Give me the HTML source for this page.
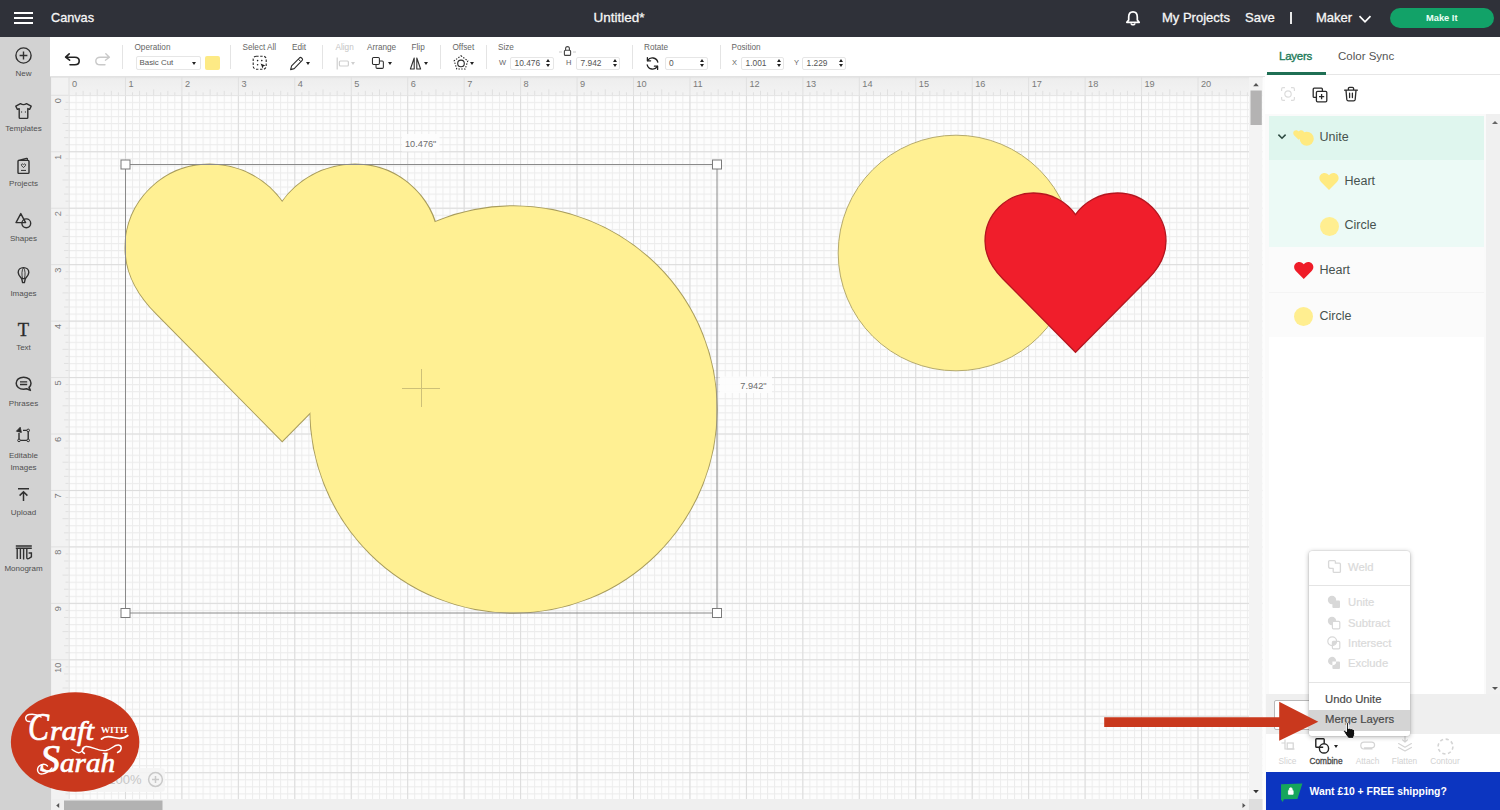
<!DOCTYPE html>
<html>
<head>
<meta charset="utf-8">
<title>Canvas</title>
<style>
*{box-sizing:border-box;margin:0;padding:0}
html,body{width:1500px;height:810px;overflow:hidden;background:#fafafa;font-family:"Liberation Sans",sans-serif;color:#444}
.abs{position:absolute}
#topbar{position:absolute;left:0;top:0;width:1500px;height:36.5px;background:#2f3139;color:#fff}
#topbar .t{position:absolute;top:10px;font-size:13px;line-height:16px;white-space:nowrap;color:#f6f6f6;-webkit-text-stroke:0.3px #f6f6f6}
#sidebar{position:absolute;left:0;top:37px;width:51px;height:773px;background:#d2d2d2}
#sidebar .lbl{position:absolute;left:-12px;width:71px;text-align:center;font-size:8px;line-height:10px;color:#505050;white-space:nowrap}
#sidebar svg{position:absolute}
#toolbar{position:absolute;left:50px;top:37px;width:1215px;height:40px;background:#fff;border-bottom:1px solid #e2e2e2}
#toolbar .h{position:absolute;top:5.5px;font-size:8.2px;line-height:9px;color:#666;white-space:nowrap}
#toolbar .sep{position:absolute;top:7.5px;width:1px;height:24px;background:#e4e4e4}
#toolbar .inp{position:absolute;top:19.5px;height:13px;border:1px solid #e6e6e6;border-radius:2px;background:#fff;font-size:8.4px;line-height:11px;color:#555;padding-left:3.5px;white-space:nowrap}
#toolbar .k{position:absolute;top:21px;font-size:7.5px;line-height:9px;color:#666}
#toolbar svg{position:absolute}
#canvas{position:absolute;left:50px;top:77px;width:1215px;height:733px;overflow:hidden;background:#fbfbfb}
#panel{position:absolute;left:1265px;top:37px;width:235px;height:773px;background:#fafafa}
</style>
</head>
<body>
<div id="canvas">
<svg class="abs" style="left:0;top:0" width="1215" height="733" viewBox="50 77 1215 733">
<defs>
<pattern id="minor" x="68.5" y="94.8" width="7.05625" height="7.05625" patternUnits="userSpaceOnUse">
<path d="M0.5 0V7.05625M0 0.5H7.05625" stroke="#ececec" stroke-width="1" fill="none"/>
</pattern>
<pattern id="major" x="68.5" y="94.8" width="56.45" height="56.45" patternUnits="userSpaceOnUse">
<path d="M0.5 0V56.45M0 0.5H56.45" stroke="#dcdcdc" stroke-width="1" fill="none"/>
</pattern>
</defs>
<rect x="50" y="77" width="1215" height="733" fill="#fdfdfd"/>
<rect x="50" y="77" width="1215" height="733" fill="url(#minor)"/>
<rect x="50" y="77" width="1215" height="733" fill="url(#major)"/>

<!-- united shape -->
<g stroke="#a89c5c" stroke-width="2" fill="#fff093">
<path d="M282.2 202.0C297.0 181.0 323.0 164.5 355.0 164.5C401.4 164.5 439.0 201.8 439.0 247.8C439.0 273.9 426.9 294.7 407.8 313.8L282.2 441.0L156.7 313.8C137.6 294.7 125.5 273.9 125.5 247.8C125.5 201.8 163.1 164.5 209.5 164.5C241.5 164.5 267.5 181.0 282.2 202.0Z"/>
<circle cx="513.5" cy="409.5" r="203.2"/>
</g>
<g fill="#fff093">
<path d="M282.2 202.0C297.0 181.0 323.0 164.5 355.0 164.5C401.4 164.5 439.0 201.8 439.0 247.8C439.0 273.9 426.9 294.7 407.8 313.8L282.2 441.0L156.7 313.8C137.6 294.7 125.5 273.9 125.5 247.8C125.5 201.8 163.1 164.5 209.5 164.5C241.5 164.5 267.5 181.0 282.2 202.0Z"/>
<circle cx="513.5" cy="409.5" r="203.2"/>
</g>
<!-- right circle + heart -->
<circle cx="956" cy="253" r="117.8" fill="#fff093" stroke="#b5aa6c" stroke-width="1"/>
<path d="M1075.5 214.6C1084.0 202.5 1099.0 193.0 1117.5 193.0C1144.3 193.0 1166.0 214.5 1166.0 241.0C1166.0 256.0 1159.0 268.0 1148.0 279.0L1075.5 352.3L1003.0 279.0C992.0 268.0 985.0 256.0 985.0 241.0C985.0 214.5 1006.7 193.0 1033.5 193.0C1052.0 193.0 1067.0 202.5 1075.5 214.6Z" fill="#f01e2b" stroke="#b5161f" stroke-width="1.3"/>
<!-- selection box -->
<rect x="125.5" y="164.5" width="591.5" height="448.5" fill="none" stroke="#8a8a8a" stroke-width="1"/>
<g fill="#fff" stroke="#7a7a7a" stroke-width="1">
<rect x="121" y="160" width="9" height="9"/>
<rect x="712.5" y="160" width="9" height="9"/>
<rect x="121" y="608.5" width="9" height="9"/>
<rect x="712.5" y="608.5" width="9" height="9"/>
</g>
<path d="M421.5 369V407M402 388.5H440" stroke="#cdc078" stroke-width="1" fill="none"/>
<rect x="402" y="134" width="37.5" height="17.500000" fill="#fdfdfd" opacity="0.9"/>
<text id="dim_w" x="405" y="146.6" font-family="Liberation Sans, sans-serif" font-size="9.2" fill="#6c6c6c">10.476"</text>
<rect x="720" y="376.5" width="52" height="16.500000" fill="#fdfdfd" opacity="0.9"/>
<text id="dim_h" x="740.3" y="388.6" font-family="Liberation Sans, sans-serif" font-size="9.2" fill="#6c6c6c">7.942"</text>
<!--SHAPES-->
</svg>
<!--RUL-START-->
<svg class="abs" style="left:0;top:0" width="1215" height="733" viewBox="50 77 1215 733">
<defs><linearGradient id="rg" x1="0" y1="0" x2="0" y2="1"><stop offset="0" stop-color="#e2e2e2"/><stop offset="0.1" stop-color="#eeeeee"/><stop offset="1" stop-color="#f3f3f3"/></linearGradient></defs>
<rect x="50" y="77" width="1213" height="18.3" fill="url(#rg)"/>
<rect x="50" y="78" width="18.5" height="732" fill="#f2f2f2"/>
<rect x="50" y="77" width="1.2" height="733" fill="#e4e4e4"/>
<path d="M69.00 77.0V95.3M76.06 92.3V95.3M83.11 90.8V95.3M90.17 92.3V95.3M97.22 89.3V95.3M104.28 92.3V95.3M111.34 90.8V95.3M118.39 92.3V95.3M125.45 77.0V95.3M132.51 92.3V95.3M139.56 90.8V95.3M146.62 92.3V95.3M153.68 89.3V95.3M160.73 92.3V95.3M167.79 90.8V95.3M174.84 92.3V95.3M181.90 77.0V95.3M188.96 92.3V95.3M196.01 90.8V95.3M203.07 92.3V95.3M210.12 89.3V95.3M217.18 92.3V95.3M224.24 90.8V95.3M231.29 92.3V95.3M238.35 77.0V95.3M245.41 92.3V95.3M252.46 90.8V95.3M259.52 92.3V95.3M266.58 89.3V95.3M273.63 92.3V95.3M280.69 90.8V95.3M287.74 92.3V95.3M294.80 77.0V95.3M301.86 92.3V95.3M308.91 90.8V95.3M315.97 92.3V95.3M323.02 89.3V95.3M330.08 92.3V95.3M337.14 90.8V95.3M344.19 92.3V95.3M351.25 77.0V95.3M358.31 92.3V95.3M365.36 90.8V95.3M372.42 92.3V95.3M379.48 89.3V95.3M386.53 92.3V95.3M393.59 90.8V95.3M400.64 92.3V95.3M407.70 77.0V95.3M414.76 92.3V95.3M421.81 90.8V95.3M428.87 92.3V95.3M435.93 89.3V95.3M442.98 92.3V95.3M450.04 90.8V95.3M457.09 92.3V95.3M464.15 77.0V95.3M471.21 92.3V95.3M478.26 90.8V95.3M485.32 92.3V95.3M492.38 89.3V95.3M499.43 92.3V95.3M506.49 90.8V95.3M513.54 92.3V95.3M520.60 77.0V95.3M527.66 92.3V95.3M534.71 90.8V95.3M541.77 92.3V95.3M548.83 89.3V95.3M555.88 92.3V95.3M562.94 90.8V95.3M569.99 92.3V95.3M577.05 77.0V95.3M584.11 92.3V95.3M591.16 90.8V95.3M598.22 92.3V95.3M605.27 89.3V95.3M612.33 92.3V95.3M619.39 90.8V95.3M626.44 92.3V95.3M633.50 77.0V95.3M640.56 92.3V95.3M647.61 90.8V95.3M654.67 92.3V95.3M661.73 89.3V95.3M668.78 92.3V95.3M675.84 90.8V95.3M682.89 92.3V95.3M689.95 77.0V95.3M697.01 92.3V95.3M704.06 90.8V95.3M711.12 92.3V95.3M718.18 89.3V95.3M725.23 92.3V95.3M732.29 90.8V95.3M739.34 92.3V95.3M746.40 77.0V95.3M753.46 92.3V95.3M760.51 90.8V95.3M767.57 92.3V95.3M774.62 89.3V95.3M781.68 92.3V95.3M788.74 90.8V95.3M795.79 92.3V95.3M802.85 77.0V95.3M809.91 92.3V95.3M816.96 90.8V95.3M824.02 92.3V95.3M831.08 89.3V95.3M838.13 92.3V95.3M845.19 90.8V95.3M852.24 92.3V95.3M859.30 77.0V95.3M866.36 92.3V95.3M873.41 90.8V95.3M880.47 92.3V95.3M887.53 89.3V95.3M894.58 92.3V95.3M901.64 90.8V95.3M908.69 92.3V95.3M915.75 77.0V95.3M922.81 92.3V95.3M929.86 90.8V95.3M936.92 92.3V95.3M943.98 89.3V95.3M951.03 92.3V95.3M958.09 90.8V95.3M965.14 92.3V95.3M972.20 77.0V95.3M979.26 92.3V95.3M986.31 90.8V95.3M993.37 92.3V95.3M1000.43 89.3V95.3M1007.48 92.3V95.3M1014.54 90.8V95.3M1021.59 92.3V95.3M1028.65 77.0V95.3M1035.71 92.3V95.3M1042.76 90.8V95.3M1049.82 92.3V95.3M1056.88 89.3V95.3M1063.93 92.3V95.3M1070.99 90.8V95.3M1078.04 92.3V95.3M1085.10 77.0V95.3M1092.16 92.3V95.3M1099.21 90.8V95.3M1106.27 92.3V95.3M1113.33 89.3V95.3M1120.38 92.3V95.3M1127.44 90.8V95.3M1134.49 92.3V95.3M1141.55 77.0V95.3M1148.61 92.3V95.3M1155.66 90.8V95.3M1162.72 92.3V95.3M1169.78 89.3V95.3M1176.83 92.3V95.3M1183.89 90.8V95.3M1190.94 92.3V95.3M1198.00 77.0V95.3M1205.06 92.3V95.3M1212.11 90.8V95.3M1219.17 92.3V95.3M1226.23 89.3V95.3M1233.28 92.3V95.3M1240.34 90.8V95.3M1247.39 92.3V95.3" stroke="#e0e0e0" stroke-width="1" fill="none"/>
<path d="M50.0 95.30H68.5M65.5 102.36H68.5M64.0 109.41H68.5M65.5 116.47H68.5M62.5 123.53H68.5M65.5 130.58H68.5M64.0 137.64H68.5M65.5 144.69H68.5M50.0 151.75H68.5M65.5 158.81H68.5M64.0 165.86H68.5M65.5 172.92H68.5M62.5 179.98H68.5M65.5 187.03H68.5M64.0 194.09H68.5M65.5 201.14H68.5M50.0 208.20H68.5M65.5 215.26H68.5M64.0 222.31H68.5M65.5 229.37H68.5M62.5 236.43H68.5M65.5 243.48H68.5M64.0 250.54H68.5M65.5 257.59H68.5M50.0 264.65H68.5M65.5 271.71H68.5M64.0 278.76H68.5M65.5 285.82H68.5M62.5 292.88H68.5M65.5 299.93H68.5M64.0 306.99H68.5M65.5 314.04H68.5M50.0 321.10H68.5M65.5 328.16H68.5M64.0 335.21H68.5M65.5 342.27H68.5M62.5 349.32H68.5M65.5 356.38H68.5M64.0 363.44H68.5M65.5 370.49H68.5M50.0 377.55H68.5M65.5 384.61H68.5M64.0 391.66H68.5M65.5 398.72H68.5M62.5 405.78H68.5M65.5 412.83H68.5M64.0 419.89H68.5M65.5 426.94H68.5M50.0 434.00H68.5M65.5 441.06H68.5M64.0 448.11H68.5M65.5 455.17H68.5M62.5 462.23H68.5M65.5 469.28H68.5M64.0 476.34H68.5M65.5 483.39H68.5M50.0 490.45H68.5M65.5 497.51H68.5M64.0 504.56H68.5M65.5 511.62H68.5M62.5 518.67H68.5M65.5 525.73H68.5M64.0 532.79H68.5M65.5 539.84H68.5M50.0 546.90H68.5M65.5 553.96H68.5M64.0 561.01H68.5M65.5 568.07H68.5M62.5 575.12H68.5M65.5 582.18H68.5M64.0 589.24H68.5M65.5 596.29H68.5M50.0 603.35H68.5M65.5 610.41H68.5M64.0 617.46H68.5M65.5 624.52H68.5M62.5 631.57H68.5M65.5 638.63H68.5M64.0 645.69H68.5M65.5 652.74H68.5M50.0 659.80H68.5M65.5 666.86H68.5M64.0 673.91H68.5M65.5 680.97H68.5M62.5 688.02H68.5M65.5 695.08H68.5M64.0 702.14H68.5M65.5 709.19H68.5M50.0 716.25H68.5M65.5 723.31H68.5M64.0 730.36H68.5M65.5 737.42H68.5M62.5 744.48H68.5M65.5 751.53H68.5M64.0 758.59H68.5M65.5 765.64H68.5M50.0 772.70H68.5M65.5 779.76H68.5M64.0 786.81H68.5M65.5 793.87H68.5" stroke="#e0e0e0" stroke-width="1" fill="none"/>
<g font-family="Liberation Sans, sans-serif" font-size="9.2" fill="#7a7a7a">
<text x="72.0" y="87.4">0</text><text x="128.4" y="87.4">1</text><text x="184.9" y="87.4">2</text><text x="241.4" y="87.4">3</text><text x="297.8" y="87.4">4</text><text x="354.2" y="87.4">5</text><text x="410.7" y="87.4">6</text><text x="467.2" y="87.4">7</text><text x="523.6" y="87.4">8</text><text x="580.0" y="87.4">9</text><text x="636.5" y="87.4">10</text><text x="693.0" y="87.4">11</text><text x="749.4" y="87.4">12</text><text x="805.9" y="87.4">13</text><text x="862.3" y="87.4">14</text><text x="918.8" y="87.4">15</text><text x="975.2" y="87.4">16</text><text x="1031.7" y="87.4">17</text><text x="1088.1" y="87.4">18</text><text x="1144.5" y="87.4">19</text><text x="1201.0" y="87.4">20</text>
<text transform="translate(60.8 98.1) rotate(-90)" text-anchor="end">0</text><text transform="translate(60.8 154.6) rotate(-90)" text-anchor="end">1</text><text transform="translate(60.8 211.0) rotate(-90)" text-anchor="end">2</text><text transform="translate(60.8 267.5) rotate(-90)" text-anchor="end">3</text><text transform="translate(60.8 323.9) rotate(-90)" text-anchor="end">4</text><text transform="translate(60.8 380.4) rotate(-90)" text-anchor="end">5</text><text transform="translate(60.8 436.8) rotate(-90)" text-anchor="end">6</text><text transform="translate(60.8 493.3) rotate(-90)" text-anchor="end">7</text><text transform="translate(60.8 549.7) rotate(-90)" text-anchor="end">8</text><text transform="translate(60.8 606.1) rotate(-90)" text-anchor="end">9</text><text transform="translate(60.8 662.6) rotate(-90)" text-anchor="end">10</text><text transform="translate(60.8 719.0) rotate(-90)" text-anchor="end">11</text><text transform="translate(60.8 775.5) rotate(-90)" text-anchor="end">12</text>
</g>
<rect x="1249" y="77.5" width="13.5" height="733" fill="#f3f3f3"/>
<rect x="1250.5" y="90.5" width="11.3" height="34.5" fill="#b4b3b3"/>
<path d="M1253.2 86.2L1256 83L1258.8 86.2Z" fill="#555"/>
<path d="M1253.2 790L1256 793.2L1258.8 790Z" fill="#333"/>
<rect x="1262.5" y="77.5" width="3" height="733" fill="#fdfdfd"/>
<rect x="50" y="799" width="1199" height="11" fill="#efefef"/>
<rect x="64" y="800.5" width="98.5" height="9.5" fill="#b2b2b2"/>
<path d="M59.2 803L56.2 805.5L59.2 808Z" fill="#555"/>
<path d="M1242.5 803L1245.5 805.5L1242.5 808Z" fill="#555"/>
<rect x="1249" y="799" width="13.5" height="11" fill="#dedede"/>
</svg>
<!--RUL-END-->

</div>
<div id="topbar">

<div class="abs" style="left:14px;top:12px;width:19px;height:2px;background:#fff"></div>
<div class="abs" style="left:14px;top:17px;width:19px;height:2px;background:#fff"></div>
<div class="abs" style="left:14px;top:22px;width:19px;height:2px;background:#fff"></div>
<div class="t" id="t_canvas" style="left:51px;font-size:12.7px">Canvas</div>
<div class="t" id="t_untitled" style="left:593.5px;font-size:13.5px">Untitled*</div>
<svg class="abs" style="left:1125px;top:10.3px" width="16" height="17" viewBox="0 0 16 17"><path d="M1.8 12.3L3.7 10V7C3.7 3.800000 5.600000 1.800000 8 1.800000C10.4 1.800000 12.3 3.8 12.3 7V10L14.2 12.3Z" fill="none" stroke="#fff" stroke-width="1.7" stroke-linejoin="round"/><path d="M6.2 13.9Q8 15.8 9.800000 13.9" fill="none" stroke="#fff" stroke-width="1.500000" stroke-linecap="round"/></svg>
<div class="t" id="t_myproj" style="left:1162px">My Projects</div>
<div class="t" id="t_save" style="left:1245px">Save</div>
<div class="abs" style="left:1290px;top:12px;width:2px;height:11.5px;background:#e8e8e8"></div>
<div class="t" id="t_maker" style="left:1316px">Maker</div>
<svg class="abs" style="left:1358px;top:13.5px" width="14" height="10" viewBox="0 0 14 10"><path d="M1.500000 2.2L7 7.8L12.500000 2.2" fill="none" stroke="#fff" stroke-width="1.700000"/></svg>
<div class="abs" id="makeit" style="left:1390px;top:7.600000px;width:103.500000px;height:20.600000px;border-radius:10.300000px;background:#12a268;color:#e9fff6;font-size:9.3px;font-weight:bold;line-height:20.600000px;text-align:center">Make It</div>

</div>
<div id="sidebar">
<svg style="left:14px;top:9px" width="19" height="19" viewBox="0 0 19 19"><circle cx="9.5" cy="9.500000" r="7.6" fill="none" stroke="#303030" stroke-width="1.4"/><path d="M9.500000 5.600000V13.400000M5.600000 9.500000H13.400000" stroke="#303030" stroke-width="1.4"/></svg>
<div class="lbl" id="l_new" style="top:32px">New</div>
<svg style="left:14px;top:65px" width="19" height="18" viewBox="0 0 19 18"><path d="M6.500000 1.600000Q9.500000 3.600000 12.500000 1.600000L17.200000 4.200000L15.600000 7.400000L13.800000 6.600000V15.600000Q13.800000 16.400000 13 16.400000H6Q5.200000 16.400000 5.200000 15.600000V6.600000L3.400000 7.400000L1.800000 4.200000Z" fill="none" stroke="#303030" stroke-width="1.4" stroke-linejoin="round"/><path d="M7.600000 9.400000V10.600000M11.400000 9.400000V10.600000" stroke="#303030" stroke-width="1"/></svg>
<div class="lbl" id="l_tmpl" style="top:87px">Templates</div>
<svg style="left:16px;top:120px" width="15" height="18" viewBox="0 0 15 18"><path d="M2.600000 3.400000L10.500000 1.400000Q11.400000 1.200000 11.400000 2.200000V3.400000M2.400000 3.400000H12Q13 3.400000 13 4.400000V15.400000Q13 16.400000 12 16.400000H3Q2 16.400000 2 15.400000V4.400000Q2 3.400000 3 3.400000Z" fill="none" stroke="#303030" stroke-width="1.4" stroke-linejoin="round"/><path d="M7.500000 10.600000L5.600000 8.700000Q4.900000 7.600000 5.900000 7Q6.900000 6.600000 7.500000 7.600000Q8.100000 6.600000 9.100000 7Q10.100000 7.600000 9.400000 8.700000Z" fill="none" stroke="#303030" stroke-width="0.9"/><path d="M5 13.400000H10" stroke="#303030" stroke-width="1"/></svg>
<div class="lbl" id="l_proj" style="top:142px">Projects</div>
<svg style="left:14px;top:174px" width="20" height="19" viewBox="0 0 20 19"><path d="M6.800000 2.600000L11.600000 11.600000H2Z" fill="none" stroke="#303030" stroke-width="1.4" stroke-linejoin="round"/><circle cx="12.300000" cy="12.300000" r="4.400000" fill="none" stroke="#303030" stroke-width="1.4"/></svg>
<div class="lbl" id="l_shapes" style="top:197px">Shapes</div>
<svg style="left:16px;top:229px" width="15" height="19" viewBox="0 0 15 19"><path d="M7.500000 1.600000C10.800000 1.600000 12.800000 3.800000 12.800000 6.400000C12.800000 9 10.600000 11 9.300000 12.600000H5.700000C4.400000 11 2.200000 9 2.200000 6.400000C2.200000 3.800000 4.200000 1.600000 7.500000 1.600000Z" fill="none" stroke="#303030" stroke-width="1.4"/><path d="M7.500000 1.600000C5.600000 3.600000 5.600000 9.600000 6.600000 12.600000M7.500000 1.600000C9.400000 3.600000 9.400000 9.600000 8.400000 12.600000" fill="none" stroke="#303030" stroke-width="0.9"/><path d="M5.700000 12.600000L6.600000 16.600000H8.400000L9.300000 12.600000" fill="none" stroke="#303030" stroke-width="1.4" stroke-linejoin="round"/></svg>
<div class="lbl" id="l_images" style="top:252px">Images</div>
<div class="abs" style="left:13px;top:281.5px;width:21px;text-align:center;font-family:'Liberation Serif',serif;font-size:18.5px;line-height:22px;color:#2a2a2a;-webkit-text-stroke:0.3px #2a2a2a">T</div>
<div class="lbl" id="l_text" style="top:306px">Text</div>
<svg style="left:14px;top:338px" width="20" height="18" viewBox="0 0 20 18"><path d="M9.600000 2.200000C14 2.200000 17 4.800000 17 8.200000C17 10 16.200000 11.400000 15 12.400000L16.400000 15.400000L12.600000 13.800000C11.600000 14.100000 10.600000 14.200000 9.600000 14.200000C5.200000 14.200000 2.200000 11.600000 2.200000 8.200000C2.200000 4.800000 5.200000 2.200000 9.600000 2.200000Z" fill="none" stroke="#303030" stroke-width="1.5" stroke-linejoin="round"/><path d="M6 6.900000H13.200000M6 9.500000H13.200000" stroke="#303030" stroke-width="1.4"/></svg>
<div class="lbl" id="l_phr" style="top:361.5px">Phrases</div>
<svg style="left:14px;top:388px" width="19" height="20" viewBox="0 0 19 20"><path d="M6.200000 2.200000L7.400000 7.400000L2.400000 6.200000Z" fill="#2a2a2a" stroke="#2a2a2a" stroke-width="0.8" stroke-linejoin="round"/><path d="M5 8V15.400000H14.200000V5.400000H9" fill="none" stroke="#303030" stroke-width="1.4"/><circle cx="5" cy="15.400000" r="1.300000" fill="#d2d2d2" stroke="#303030" stroke-width="1"/><circle cx="14.200000" cy="15.400000" r="1.300000" fill="#d2d2d2" stroke="#303030" stroke-width="1"/><circle cx="14.200000" cy="5.400000" r="1.300000" fill="#d2d2d2" stroke="#303030" stroke-width="1"/></svg>
<div class="lbl" id="l_edit" style="top:413.5px">Editable</div>
<div class="lbl" id="l_edit2" style="top:425.5px">Images</div>
<svg style="left:15px;top:449px" width="17" height="18" viewBox="0 0 17 18"><path d="M3 2.800000H14M8.500000 15V6M4.600000 9.600000L8.500000 5.800000L12.400000 9.600000" fill="none" stroke="#303030" stroke-width="1.5"/></svg>
<div class="lbl" id="l_upl" style="top:471px">Upload</div>
<svg style="left:14px;top:506px" width="20" height="19" viewBox="0 0 20 19"><path d="M1.800000 3H17.800000M1.800000 5.200000H17.800000M3.200000 5.200000V16M6.400000 5.200000V16M9.600000 5.200000V16.400000M12.800000 5.200000V14.400000Q12.800000 16.400000 15 15.400000L17.400000 13.800000V10H14.600000" fill="none" stroke="#303030" stroke-width="1.4"/></svg>
<div class="lbl" id="l_mono" style="top:526.5px">Monogram</div>

</div>
<div id="toolbar">
<svg style="left:13px;top:14px" width="20" height="18" viewBox="0 0 20 18"><path d="M6.2 2.8L2.6 6.2L6.6 9.2M2.8 6.2H11.8C14.6 6.2 16.2 7.8 16.2 10C16.2 12.2 14.6 13.8 11.8 13.8H7" fill="none" stroke="#222" stroke-width="1.6" stroke-linejoin="round" stroke-linecap="round"/></svg>
<svg style="left:42px;top:14px" width="20" height="18" viewBox="0 0 20 18"><path d="M13.800000 2.800000L17.400000 6.200000L13.400000 9.200000M17.200000 6.200000H8.200000C5.400000 6.200000 3.800000 7.800000 3.800000 10C3.800000 12.200000 5.400000 13.800000 8.200000 13.800000H13" fill="none" stroke="#c9c9c9" stroke-width="1.4" stroke-linejoin="round" stroke-linecap="round"/></svg>
<div class="sep" style="left:72px"></div>
<div class="h" id="h_op" style="left:84.5px;color:#666">Operation</div>
<div class="inp" id="i_op" style="left:85.5px;width:65px;top:19px;height:13.5px;font-size:7.9px;padding-left:3px">Basic Cut</div>
<div class="abs" style="left:141.5px;top:24.5px;width:0;height:0;border-left:2.5px solid transparent;border-right:2.5px solid transparent;border-top:3.5px solid #222"></div>
<div class="abs" style="left:155px;top:18.5px;width:15px;height:14.500000px;border-radius:2px;background:#fdea85"></div>
<div class="sep" style="left:180px"></div>
<div class="h" id="h_sel" style="left:192.5px;color:#666">Select All</div>
<svg style="left:201px;top:17px" width="18" height="18" viewBox="0 0 18 18"><rect x="2.200000" y="2.200000" width="13" height="13" rx="3" fill="none" stroke="#2c2c2c" stroke-width="1.1" stroke-dasharray="2.400000 1.600000"/><g fill="#222"><circle cx="6.600000" cy="6.600000" r="0.800000"/><circle cx="10.800000" cy="6.600000" r="0.800000"/><circle cx="6.600000" cy="10.800000" r="0.800000"/><path d="M9.600000 9.400000L14.400000 11.400000L12.400000 12.200000L11.600000 14.400000Z"/></g></svg>
<div class="h" id="h_edit" style="left:242px;color:#666">Edit</div>
<svg style="left:238px;top:17.5px" width="17" height="17" viewBox="0 0 17 17"><path d="M2.600000 14.600000L3.600000 10.800000L11.600000 2.800000Q12.600000 2 13.600000 3L14.200000 3.600000Q15 4.600000 14.200000 5.400000L6.200000 13.600000Z" fill="none" stroke="#2c2c2c" stroke-width="1.1" stroke-linejoin="round"/><path d="M10.400000 4.200000L12.800000 6.600000" stroke="#222" stroke-width="1"/></svg>
<div class="abs" style="left:255.5px;top:25px;width:0;height:0;border-left:2.5px solid transparent;border-right:2.5px solid transparent;border-top:3.5px solid #222"></div>
<div class="sep" style="left:271.5px"></div>
<div class="h" id="h_align" style="left:285.5px;color:#c4c4c4">Align</div>
<svg style="left:284.5px;top:18.5px" width="16" height="15" viewBox="0 0 16 15"><path d="M2.200000 1.500000V13.500000" stroke="#cfcfcf" stroke-width="1.2"/><rect x="4.400000" y="5" width="9" height="5" rx="1" fill="none" stroke="#cfcfcf" stroke-width="1.2"/></svg>
<div class="abs" style="left:301.0px;top:25px;width:0;height:0;border-left:2.5px solid transparent;border-right:2.5px solid transparent;border-top:3.5px solid #cfcfcf"></div>
<div class="h" id="h_arr" style="left:317px;color:#666">Arrange</div>
<svg style="left:320px;top:18px" width="16" height="16" viewBox="0 0 17 17"><rect x="2.600000" y="2.600000" width="7.400000" height="7.400000" rx="1.200000" fill="none" stroke="#2c2c2c" stroke-width="1.1"/><path d="M10 6.400000H13Q14.200000 6.400000 14.200000 7.600000V13Q14.200000 14.200000 13 14.200000H7.600000Q6.400000 14.200000 6.400000 13V10" fill="none" stroke="#2c2c2c" stroke-width="1.1"/></svg>
<div class="abs" style="left:337.5px;top:25px;width:0;height:0;border-left:2.5px solid transparent;border-right:2.5px solid transparent;border-top:3.5px solid #222"></div>
<div class="h" id="h_flip" style="left:361.5px;color:#666">Flip</div>
<svg style="left:357px;top:17.5px" width="17" height="17" viewBox="0 0 17 17"><path d="M7.2 3V14H3.4Z" fill="none" stroke="#333" stroke-width="1.1" stroke-linejoin="round"/><path d="M9.8 3V14H13.6Z" fill="none" stroke="#333" stroke-width="1.1" stroke-linejoin="round"/></svg>
<div class="abs" style="left:374.0px;top:25px;width:0;height:0;border-left:2.5px solid transparent;border-right:2.5px solid transparent;border-top:3.5px solid #222"></div>
<div class="sep" style="left:390px"></div>
<div class="h" id="h_off" style="left:402.5px;color:#666">Offset</div>
<svg style="left:401.5px;top:17px" width="18" height="18" viewBox="0 0 18 18"><path d="M9 1.800000L15.800000 6.800000L13.200000 15H4.800000L2.200000 6.800000Z" fill="none" stroke="#222" stroke-width="1.1" stroke-dasharray="1.400000 1.400000" stroke-linejoin="round"/><circle cx="9" cy="9.400000" r="3.300000" fill="none" stroke="#2c2c2c" stroke-width="1.1"/></svg>
<div class="abs" style="left:419.5px;top:25px;width:0;height:0;border-left:2.5px solid transparent;border-right:2.5px solid transparent;border-top:3.5px solid #222"></div>
<div class="sep" style="left:435.5px"></div>
<div class="h" id="h_size" style="left:448px;color:#666">Size</div>
<div class="k" id="k_w" style="left:449px">W</div>
<div class="inp" id="i_w" style="left:460px;width:44px">10.476</div>
<div class="abs" style="left:495.5px;top:21.5px;width:0;height:0;border-left:2.5px solid transparent;border-right:2.5px solid transparent;border-bottom:3.5px solid #222"></div><div class="abs" style="left:495.5px;top:26.5px;width:0;height:0;border-left:2.5px solid transparent;border-right:2.5px solid transparent;border-top:3.5px solid #222"></div>
<svg style="left:508px;top:7.5px" width="19" height="12" viewBox="0 0 19 12"><path d="M1 7H4M15 7H18" stroke="#c8c8c8" stroke-width="1"/><rect x="6.400000" y="5.200000" width="6.200000" height="5.200000" rx="1" fill="none" stroke="#444" stroke-width="1.1"/><path d="M7.600000 5.200000V3.600000Q7.600000 1.600000 9.500000 1.600000Q11.400000 1.600000 11.400000 3.600000V5.200000" fill="none" stroke="#444" stroke-width="1.1"/></svg>
<div class="k" id="k_h" style="left:516px">H</div>
<div class="inp" id="i_h" style="left:526px;width:44px">7.942</div>
<div class="abs" style="left:562.5px;top:21.5px;width:0;height:0;border-left:2.5px solid transparent;border-right:2.5px solid transparent;border-bottom:3.5px solid #222"></div><div class="abs" style="left:562.5px;top:26.5px;width:0;height:0;border-left:2.5px solid transparent;border-right:2.5px solid transparent;border-top:3.5px solid #222"></div>
<div class="sep" style="left:581.5px"></div>
<div class="h" id="h_rot" style="left:594px;color:#666">Rotate</div>
<svg style="left:593.5px;top:18px" width="17" height="17" viewBox="0 0 17 17"><path d="M13.800000 7.200000A5.600000 5.600000 0 0 0 3.600000 5.600000M3.200000 9.800000A5.600000 5.600000 0 0 0 13.400000 11.400000" fill="none" stroke="#222" stroke-width="1.300000" stroke-linecap="round"/><path d="M3.400000 2.600000V5.800000H6.600000M13.600000 14.400000V11.200000H10.400000" fill="none" stroke="#222" stroke-width="1.300000" stroke-linecap="round" stroke-linejoin="round"/></svg>
<div class="inp" id="i_r" style="left:614.5px;width:43.5px">0</div>
<div class="abs" style="left:650.0px;top:21.5px;width:0;height:0;border-left:2.5px solid transparent;border-right:2.5px solid transparent;border-bottom:3.5px solid #222"></div><div class="abs" style="left:650.0px;top:26.5px;width:0;height:0;border-left:2.5px solid transparent;border-right:2.5px solid transparent;border-top:3.5px solid #222"></div>
<div class="sep" style="left:669.5px"></div>
<div class="h" id="h_pos" style="left:681.5px;color:#666">Position</div>
<div class="k" id="k_x" style="left:682px">X</div>
<div class="inp" id="i_x" style="left:691px;width:43px">1.001</div>
<div class="abs" style="left:727.0px;top:21.5px;width:0;height:0;border-left:2.5px solid transparent;border-right:2.5px solid transparent;border-bottom:3.5px solid #222"></div><div class="abs" style="left:727.0px;top:26.5px;width:0;height:0;border-left:2.5px solid transparent;border-right:2.5px solid transparent;border-top:3.5px solid #222"></div>
<div class="k" id="k_y" style="left:744px">Y</div>
<div class="inp" id="i_y" style="left:752px;width:44px">1.229</div>
<div class="abs" style="left:788.5px;top:21.5px;width:0;height:0;border-left:2.5px solid transparent;border-right:2.5px solid transparent;border-bottom:3.5px solid #222"></div><div class="abs" style="left:788.5px;top:26.5px;width:0;height:0;border-left:2.5px solid transparent;border-right:2.5px solid transparent;border-top:3.5px solid #222"></div>

</div>
<div id="panel">
<!--PANEL-START-->
<div class="abs" style="left:0;top:0;width:235px;height:76.5px;background:#fff"></div>
<div class="abs" style="left:1px;top:37.2px;width:234px;height:1px;background:#e6e6e6"></div>
<div class="abs" style="left:1.5px;top:35.4px;width:59.5px;height:2.4px;background:#1f6f54"></div>
<div class="abs" id="p_layers" style="left:14px;top:11.8px;font-size:11.5px;line-height:14px;color:#1c7a58;-webkit-text-stroke:0.35px #1c7a58;letter-spacing:-0.25px;white-space:nowrap">Layers</div>
<div class="abs" id="p_csync" style="left:73px;top:11.8px;font-size:11.5px;line-height:14px;color:#555;white-space:nowrap">Color Sync</div>
<svg class="abs" style="left:14px;top:48px" width="18" height="18" viewBox="0 0 18 18"><g fill="none" stroke="#dcdcdc" stroke-width="1.2"><path d="M2.6 6V4Q2.6 2.6 4 2.6H6M12 2.6H14Q15.4 2.6 15.4 4V6M15.4 12V14Q15.4 15.4 14 15.4H12M6 15.4H4Q2.6 15.4 2.6 14V12"/><circle cx="9" cy="9" r="3.2"/></g></svg>
<svg class="abs" style="left:45.5px;top:48.5px" width="18" height="18" viewBox="0 0 18 18"><g fill="none" stroke="#2a2a2a" stroke-width="1.3" stroke-linejoin="round"><path d="M5 11.4H3.2Q2.2 11.4 2.2 10.4V3.2Q2.2 2.2 3.2 2.2H10.4Q11.4 2.2 11.4 3.2V5"/><rect x="5.4" y="5.4" width="10.4" height="10.4" rx="1.2"/><path d="M10.6 8V13.2M8 10.6H13.2"/></g></svg>
<svg class="abs" style="left:77px;top:48px" width="18" height="18" viewBox="0 0 18 18"><g fill="none" stroke="#2a2a2a" stroke-width="1.3" stroke-linejoin="round" stroke-linecap="round"><path d="M2.6 5.2H15.4M6.4 5V3.6Q6.4 2.4 7.6 2.4H10.4Q11.6 2.4 11.6 3.6V5M4 5.4L4.8 14.4Q5 15.8 6.4 15.8H11.6Q13 15.8 13.2 14.4L14 5.4M7.6 8.2V12.6M10.4 8.2V12.6"/></g></svg>
<div class="abs" style="left:4px;top:79px;width:215px;height:43.5px;background:#dff6ee"></div>
<div class="abs" style="left:4px;top:122.5px;width:215px;height:87px;background:#ecfaf6"></div>
<div class="abs" style="left:4px;top:209.5px;width:215px;height:447.5px;background:#fbfbfb"></div>
<div class="abs" style="left:4px;top:254.5px;width:215px;height:1px;background:#f4f4f4"></div>
<div class="abs" style="left:4px;top:300px;width:215px;height:357px;background:#fff"></div>
<div class="abs" style="left:221px;top:76.5px;width:14px;height:580.8px;background:#f0f0f0"></div>
<div class="abs" style="left:226.5px;top:83.5px;width:0;height:0;border-left:3px solid transparent;border-right:3px solid transparent;border-bottom:3.2px solid #666"></div>
<div class="abs" style="left:226.5px;top:649.5px;width:0;height:0;border-left:3px solid transparent;border-right:3px solid transparent;border-top:3.2px solid #555"></div>
<svg class="abs" style="left:11.5px;top:95px" width="10" height="9" viewBox="0 0 10 9"><path d="M1.4 2.6L5 6.2L8.6 2.6" fill="none" stroke="#2d4a41" stroke-width="1.5"/></svg>
<svg class="abs" style="left:28px;top:92.5px" width="21" height="16" viewBox="120 158 602 459"><path d="M282.0 201.1C296.7 180.0 322.8 163.5 354.9 163.5C401.4 163.5 439.0 200.9 439.0 247.0C439.0 273.0 426.9 293.9 407.8 313.0L282.0 440.5L156.2 313.0C137.1 293.9 125.0 273.0 125.0 247.0C125.0 200.9 162.6 163.5 209.1 163.5C241.2 163.5 267.3 180.0 282.0 201.1Z" fill="#ffea80"/><circle cx="513" cy="409" r="203" fill="#ffea80"/></svg>
<div class="abs" id="y_unite" style="left:54.5px;top:92.5px;font-size:12.5px;line-height:15px;color:#47524e;white-space:nowrap">Unite</div>
<svg class="abs" style="left:53.5px;top:135.5px" width="20" height="17" viewBox="0 0 181 160"><path d="M90.5 21.6C99.0 9.5 114.0 0.0 132.5 0.0C159.3 0.0 181.0 21.5 181.0 48.0C181.0 63.0 174.0 75.0 163.0 86.0L90.5 159.3L18.0 86.0C7.0 75.0 0.0 63.0 0.0 48.0C0.0 21.5 21.7 0.0 48.5 0.0C67.0 0.0 82.0 9.5 90.5 21.6Z" fill="#ffea80"/></svg>
<div class="abs" id="y_heart1" style="left:79.5px;top:136.5px;font-size:12.5px;line-height:15px;color:#47524e;white-space:nowrap">Heart</div>
<div class="abs" style="left:54.5px;top:179.5px;width:19px;height:19px;border-radius:50%;background:#ffee90"></div>
<div class="abs" id="y_circle1" style="left:79.5px;top:181.0px;font-size:12.5px;line-height:15px;color:#47524e;white-space:nowrap">Circle</div>
<svg class="abs" style="left:29px;top:225px" width="19.5" height="17" viewBox="0 0 181 160"><path d="M90.5 21.6C99.0 9.5 114.0 0.0 132.5 0.0C159.3 0.0 181.0 21.5 181.0 48.0C181.0 63.0 174.0 75.0 163.0 86.0L90.5 159.3L18.0 86.0C7.0 75.0 0.0 63.0 0.0 48.0C0.0 21.5 21.7 0.0 48.5 0.0C67.0 0.0 82.0 9.5 90.5 21.6Z" fill="#ef1c28"/></svg>
<div class="abs" id="y_heart2" style="left:54.5px;top:226.0px;font-size:12.5px;line-height:15px;color:#47524e;white-space:nowrap">Heart</div>
<div class="abs" style="left:29.2px;top:269.5px;width:19px;height:19px;border-radius:50%;background:#ffee90"></div>
<div class="abs" id="y_circle2" style="left:54.5px;top:271.5px;font-size:12.5px;line-height:15px;color:#47524e;white-space:nowrap">Circle</div>
<div class="abs" style="left:1px;top:657.3px;width:234px;height:39.700000px;background:#efefef"></div>
<div class="abs" style="left:8.5px;top:663px;width:60px;height:30px;border:1px solid #b9b9b9;border-radius:2px;background:#fff"></div>
<div class="abs" style="left:1px;top:697px;width:234px;height:38px;background:#fff"></div>
<svg class="abs" style="left:13.5px;top:700px" width="18" height="18" viewBox="0 0 18 18"><g fill="none" stroke="#d4d4d4" stroke-width="1.2"><path d="M6 2.4V12H15.6M2.4 6H6" /><rect x="8.2" y="6" width="6" height="6" /></g></svg>
<div class="abs" id="a_slice" style="left:-7.5px;width:60px;text-align:center;top:719px;font-size:8.3px;line-height:10px;color:#d2d2d2;font-weight:normal;white-space:nowrap">Slice</div>
<svg class="abs" style="left:47.5px;top:698.5px" width="20" height="20" viewBox="0 0 20 20"><g fill="none" stroke="#222" stroke-width="1.4"><path d="M10.2 11.2H3.6Q2.8 11.2 2.8 10.400000V3.6Q2.8 2.8 3.6 2.8H10.400000Q11.2 2.8 11.2 3.6V7.4"/><circle cx="11" cy="12.4" r="4.600000"/></g></svg>
<div class="abs" style="left:68.5px;top:707.5px;width:0;height:0;border-left:2.5px solid transparent;border-right:2.5px solid transparent;border-top:3.5px solid #222"></div>
<div class="abs" id="a_comb" style="left:31px;width:60px;text-align:center;top:719px;font-size:8.3px;line-height:10px;color:#4a4a4a;-webkit-text-stroke:0.3px #4a4a4a;font-weight:normal;white-space:nowrap">Combine</div>
<svg class="abs" style="left:92.5px;top:701px" width="20" height="14" viewBox="0 0 20 14"><path d="M6.400000 9.8H13.6Q16.6 9.8 16.6 7Q16.6 4.2 13.6 4.2H6Q2.8 4.2 2.8 7.6Q2.8 11 6 11H14" fill="none" stroke="#d4d4d4" stroke-width="1.2" stroke-linecap="round"/></svg>
<div class="abs" id="a_att" style="left:72.5px;width:60px;text-align:center;top:719px;font-size:8.3px;line-height:10px;color:#d2d2d2;font-weight:normal;white-space:nowrap">Attach</div>
<svg class="abs" style="left:130.5px;top:698px" width="18" height="20" viewBox="0 0 18 20"><g fill="none" stroke="#d4d4d4" stroke-width="1.2" stroke-linejoin="round" stroke-linecap="round"><path d="M9 1.6V7M6.6 4.800000L9 7.2L11.4 4.8M2.6 8.6L9 12.2L15.4 8.6M2.6 12.4L9 16L15.4 12.4"/></g></svg>
<div class="abs" id="a_flat" style="left:109.5px;width:60px;text-align:center;top:719px;font-size:8.3px;line-height:10px;color:#d2d2d2;font-weight:normal;white-space:nowrap">Flatten</div>
<svg class="abs" style="left:171px;top:699.5px" width="19" height="19" viewBox="0 0 19 19"><circle cx="9.5" cy="9.5" r="7.4" fill="none" stroke="#d4d4d4" stroke-width="1.6" stroke-dasharray="3.2 2.6"/></svg>
<div class="abs" id="a_cont" style="left:150px;width:60px;text-align:center;top:719px;font-size:8.3px;line-height:10px;color:#d2d2d2;font-weight:normal;white-space:nowrap">Contour</div>
<div class="abs" style="left:1px;top:734.8px;width:234px;height:39px;background:#0c35c0"></div>
<svg class="abs" style="left:13.5px;top:745.5px" width="25" height="20" viewBox="0 0 26 22"><path d="M1.5 1.5L25 0.5L19.5 17.5L4.500000 18L3.500000 21L1.500000 18.5Z" fill="#16a65c"/><path d="M9.6 12.4H14.8V8.4H9.6ZM10.6 8.2V7Q10.6 5.2 12.2 5.2Q13.8 5.2 13.8 7V8.2" fill="#fff" fill-rule="evenodd" stroke="#fff" stroke-width="0.9"/></svg>
<div class="abs" id="b_text" style="left:44.5px;top:747.5px;font-size:10.4px;line-height:14px;font-weight:bold;color:#fff;white-space:nowrap">Want £10 + FREE shipping?</div>
<!--PANEL-END-->
</div>
<!--OV-START-->
<div class="abs" style="left:66px;top:768px;width:99px;height:23.5px;border-radius:4px;background:#f4f4f4;opacity:.9"></div>
<div class="abs" style="left:91px;width:50.5px;text-align:right;top:771.5px;font-size:13px;line-height:16px;color:#c6c6c6">100%</div>
<svg class="abs" style="left:147.4px;top:771.3px" width="17" height="17" viewBox="0 0 17 17"><circle cx="8.5" cy="8.5" r="6.900000" fill="none" stroke="#c9c9c9" stroke-width="1.5"/><path d="M8.5 5V12M5 8.5H12" stroke="#c9c9c9" stroke-width="1.5"/></svg>
<div class="abs" style="left:1308.5px;top:551px;width:101px;height:185.3px;background:#fff;border-radius:3px;box-shadow:0 1px 5px rgba(0,0,0,.3),0 0 0 0.5px rgba(0,0,0,.08)"></div>
<div class="abs" style="left:1309px;top:585px;width:100.5px;height:1px;background:#e4e4e4"></div>
<div class="abs" style="left:1309px;top:682px;width:100.5px;height:1px;background:#e4e4e4"></div>
<div class="abs" style="left:1309px;top:709.5px;width:100.5px;height:21px;background:#d4d4d4"></div>
<div class="abs" id="d_weld" style="left:1348px;top:559.5px;font-size:11.3px;line-height:14px;color:#dadada;-webkit-text-stroke:0.2px #dadada;white-space:nowrap">Weld</div>
<div class="abs" id="d_unite" style="left:1348px;top:595px;font-size:11.3px;line-height:14px;color:#dadada;-webkit-text-stroke:0.2px #dadada;white-space:nowrap">Unite</div>
<div class="abs" id="d_sub" style="left:1348px;top:615.5px;font-size:11.3px;line-height:14px;color:#dadada;-webkit-text-stroke:0.2px #dadada;white-space:nowrap">Subtract</div>
<div class="abs" id="d_int" style="left:1348px;top:636px;font-size:11.3px;line-height:14px;color:#dadada;-webkit-text-stroke:0.2px #dadada;white-space:nowrap">Intersect</div>
<div class="abs" id="d_exc" style="left:1348px;top:656px;font-size:11.3px;line-height:14px;color:#dadada;-webkit-text-stroke:0.2px #dadada;white-space:nowrap">Exclude</div>
<div class="abs" id="d_undo" style="left:1325px;top:691.5px;font-size:11.3px;line-height:14px;color:#4a4a4a;-webkit-text-stroke:0.2px #4a4a4a;white-space:nowrap">Undo Unite</div>
<div class="abs" id="d_merge" style="left:1325px;top:712px;font-size:11.3px;line-height:14px;color:#4a4a4a;-webkit-text-stroke:0.2px #4a4a4a;white-space:nowrap">Merge Layers</div>
<svg class="abs" style="left:1325.5px;top:558px" width="17" height="17" viewBox="0 0 17 17"><path d="M2.6 3.6Q2.6 2.6 3.6 2.6H8.4Q9.4 2.6 9.4 3.6V5.2H13.4Q14.4 5.2 14.4 6.2V13.400000Q14.4 14.4 13.4 14.4H8.2Q7.2 14.4 7.2 13.4V10.4L5 10.4Q2.6 10.4 2.6 8.400000Z" fill="none" stroke="#d8d8d8" stroke-width="1.3" stroke-linejoin="round"/></svg>
<svg class="abs" style="left:1326px;top:594px" width="16" height="16" viewBox="0 0 16 16"><circle cx="6" cy="6" r="4.2" fill="#d8d8d8"/><rect x="6.4" y="6.4" width="7.6" height="7.6" rx="1" fill="#d8d8d8"/></svg>
<svg class="abs" style="left:1326px;top:614.5px" width="16" height="16" viewBox="0 0 16 16"><circle cx="6" cy="6" r="4.2" fill="#d8d8d8"/><rect x="6.4" y="6.4" width="7.4" height="7.4" rx="1" fill="#fff" stroke="#d8d8d8" stroke-width="1.2"/></svg>
<svg class="abs" style="left:1326px;top:635px" width="16" height="16" viewBox="0 0 16 16"><circle cx="6.2" cy="6.2" r="4.4" fill="none" stroke="#d8d8d8" stroke-width="1.2"/><rect x="6.4" y="6.4" width="7.4" height="7.4" rx="1" fill="none" stroke="#d8d8d8" stroke-width="1.2"/><path d="M6.6 6.600000H10.4Q10.4 10.4 6.6 10.4Z" fill="#d8d8d8"/></svg>
<svg class="abs" style="left:1326px;top:655px" width="16" height="16" viewBox="0 0 16 16"><path d="M6 1.800000A4.2 4.200000 0 1 0 6.4 10.2V6.4H10.2A4.2 4.2 0 0 0 6 1.800000Z" fill="#d8d8d8"/><path d="M10.2 6.4H13Q14 6.4 14 7.4V13Q14 14 13 14H7.4Q6.4 14 6.400000 13V10.2Q10.2 10.2 10.2 6.400000Z" fill="#d8d8d8"/></svg>
<svg class="abs" style="left:1100px;top:698px" width="224" height="48" viewBox="1100 698 224 48"><path d="M1104.2 717.2H1279.2V701.7L1318.300000 721.7L1279.2 740.8V727H1104.2Z" fill="#c9381d"/></svg>
<svg class="abs" style="left:1340px;top:721px" width="19" height="20" viewBox="0 0 19 20"><path d="M6.400000 2.600000Q6.4 1.600000 7.4 1.600000Q8.4 1.6 8.400000 2.6V7.600000L9.2 7.200000Q10.2 6.800000 10.6 7.800000L11.4 7.600000Q12.4 7.400000 12.800000 8.400000L13.400000 8.300000Q14.600000 8.400000 14.6 9.600000V12.600000Q14.6 14.800000 13.6 16.400000V17.400000H7.800000V16.400000Q6.6 15.4 5.2 13L3.600000 10.400000Q3.200000 9.600000 4 9.200000Q4.800000 8.800000 5.400000 9.600000L6.4 10.800000Z" fill="#111" stroke="#fff" stroke-width="1" stroke-linejoin="round"/></svg>
<svg class="abs" style="left:8px;top:689px" width="134" height="106" viewBox="8 689 134 106">
<ellipse cx="75.1" cy="742" rx="64.2" ry="49.700000" fill="#c9381d"/>
<g fill="#fff" stroke="#fff" stroke-width="0.7" font-family="Liberation Serif, serif" font-style="italic">
<text x="28" y="739.5" font-size="40" textLength="21" lengthAdjust="spacingAndGlyphs">C</text>
<text id="lg_raft" x="50" y="739.5" font-size="28" textLength="44" lengthAdjust="spacingAndGlyphs">raft</text>
<text x="40" y="772" font-size="40">S</text>
<text id="lg_arah" x="60" y="772" font-size="28" textLength="55" lengthAdjust="spacingAndGlyphs">arah</text>
</g>
<text id="lg_with" x="100.7" y="732.8" font-family="Liberation Serif, serif" font-weight="bold" font-size="7.8" fill="#fff" textLength="26.5" lengthAdjust="spacingAndGlyphs">WITH</text>
<g fill="none" stroke="#fff" stroke-linecap="round">
<path d="M101.5 739C105 735.5 110 736.5 114 737.5C120 739 125 738 127.8 735.5" stroke-width="1.8"/>
<path d="M84.5 753.5C81 752 81.5 747 86 746.5C92 746 98 751.5 106 750.5C112 749.5 114 744.5 118.5 745C122.5 745.5 122 751 117.500000 752.5" stroke-width="1.4"/>
<path d="M30 721.5C25 722 24 716 29 714.5C34 713.500000 38 715 41 717" stroke-width="1.4"/>
<path d="M52 768C46 775 38 776 37.500000 770C37.5 765 44 762.500000 47.500000 766" stroke-width="1.4"/>
<path d="M84 748C80 756 76 752 72 749.500000" stroke-width="1.3"/>
</g>
</svg>
<!--OV-END-->
</body>
</html>
